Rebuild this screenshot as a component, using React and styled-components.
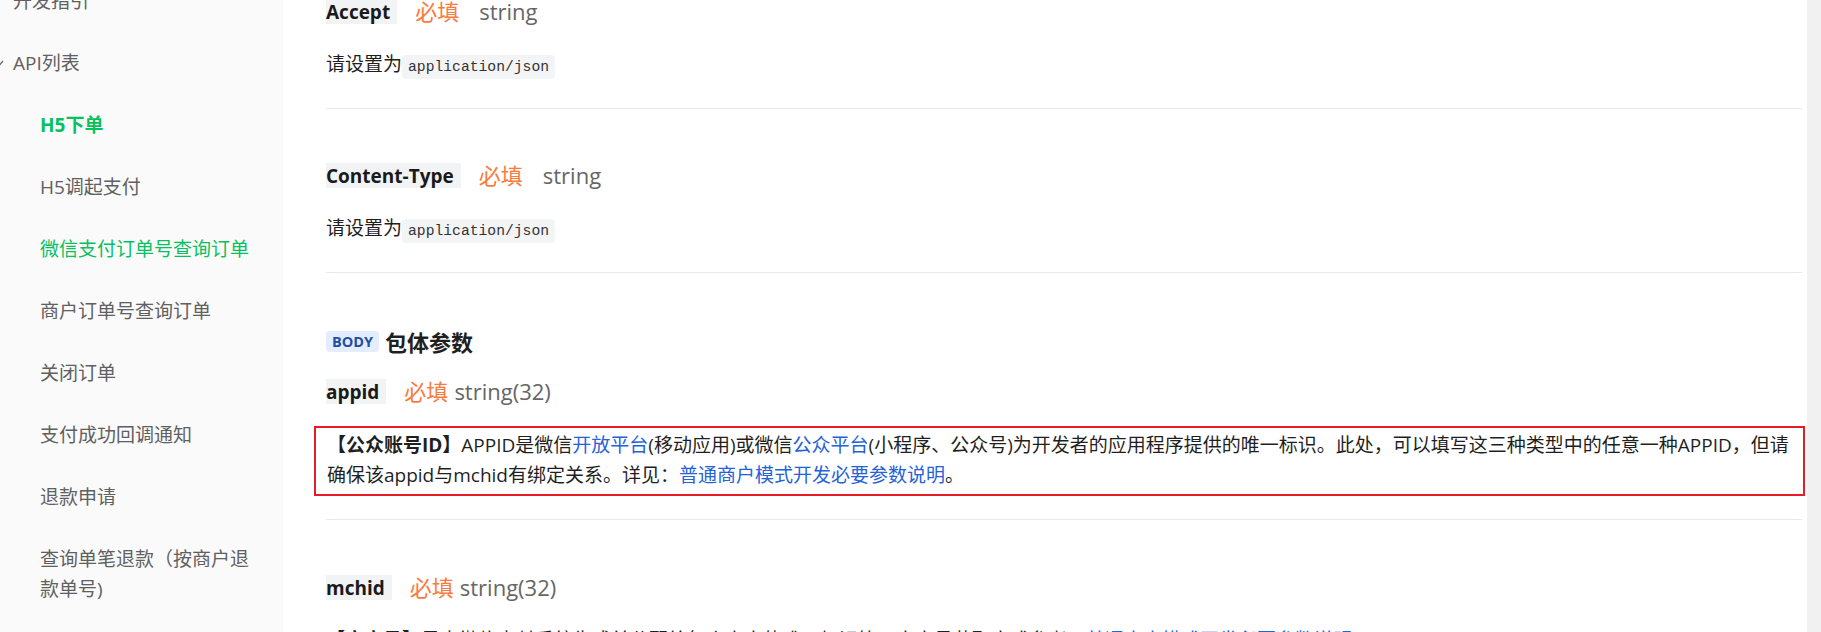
import React from 'react';
import styled, { createGlobalStyle } from 'styled-components';

const GlobalStyle = createGlobalStyle`
    html, body {
        margin: 0;
        padding: 0;
        height: 100%;
        overflow: hidden;
        background: #fff;
    }
    body {
        font-family: "Open Sans", "Noto Sans CJK SC", sans-serif;
        color: #1f1f1f;
    }
`

const Page = styled.div`
    display: flex;
    height: 632px;
    overflow: hidden;
`
const Sidebar = styled.aside`
    width: 283px;
    flex: none;
    background: #fafafa;
    overflow: hidden;
`
const NavList = styled.ul`
    list-style: none;
    margin: -30px 0 0;
    padding: 0;
`
const NavItem = styled.li`
    display: flex;
    align-items: center;
    padding: 16px 30px 16px ${p => (p.$group ? 13 : 40)}px;
    line-height: 30px;
    font-size: 19px;
    color: ${p => (p.$active ? '#07c160' : '#606060')};
    font-weight: ${p => (p.$bold ? 700 : 400)};
`
const Chevron = styled.svg`
    flex: none;
    width: 8px;
    height: 6px;
    margin-left: -17px;
    margin-right: 9px;
`
const Main = styled.main`
    flex: 1;
    min-width: 0;
    margin-top: -1px;
    padding: 0 5px 0 43px;
`
const Scrollbar = styled.div`
    width: 14px;
    flex: none;
    background: #f1f1f1;
`
const Block = styled.section`
    padding: ${p => p.$top}px 0 ${p => p.$bottom}px;
    border-bottom: 1px solid #e8e8ef;
`
const Row = styled.div`
    display: flex;
    align-items: center;
    height: 25px;
    margin-top: ${p => p.$mt || 0}px;
`
const NameTag = styled.span`
    display: inline-block;
    height: 25px;
    line-height: 26px;
    padding: 0 7px 0 0;
    background: #f2f3f5;
    font-size: 19px;
    font-weight: 700;
    color: #1a1a1a;
`
const Required = styled.span`
    margin-left: 18px;
    font-size: 22px;
    line-height: 25px;
    color: #fb7a3e;
`
const TypeText = styled.span`
    margin-left: ${p => p.$gap}px;
    font-size: 22px;
    line-height: 25px;
    color: #666;
`
const Desc = styled.p`
    margin: 25px 0 0;
    font-size: 19px;
    line-height: 30px;
    color: #1f1f1f;
`
const Highlight = styled.p`
    margin: 22px -3px 0 -12px;
    padding: 2px 11px 4px;
    border: 2px solid #e81c24;
    font-size: 19px;
    line-height: 30px;
    color: #1f1f1f;
`
const Code = styled.code`
    padding: 4px 6px;
    border-radius: 4px;
    background: #f3f4f6;
    font-family: "Liberation Mono", monospace;
    font-size: 14.7px;
    line-height: 1;
    color: #333;
`
const Link = styled.a`
    color: #2462d8;
    text-decoration: none;
`
const Heading = styled.h3`
    display: flex;
    align-items: center;
    gap: 6px;
    margin: 0;
    height: 30px;
    font-size: 22px;
    font-weight: 700;
    color: #1f1f1f;
`
const Badge = styled.span`
    display: inline-flex;
    align-items: center;
    height: 21px;
    padding: 0 6px;
    border-radius: 4px;
    background: #e3edfd;
    color: #1f4fa3;
    font-size: 14.5px;
    font-weight: 700;
`

const navItems = [
    { label: '开发指引', group: true },
    { label: 'API列表', group: true, open: true },
    { label: 'H5下单', active: true, bold: true },
    { label: 'H5调起支付' },
    { label: '微信支付订单号查询订单', active: true },
    { label: '商户订单号查询订单' },
    { label: '关闭订单' },
    { label: '支付成功回调通知' },
    { label: '退款申请' },
    { label: '查询单笔退款（按商户退款单号)' },
]

const Field = ({ name, type, gap }) => (
    <>
        <NameTag>{name}</NameTag>
        <Required>必填</Required>
        <TypeText $gap={gap}>{type}</TypeText>
    </>
)

const App = () => {
    return (
        <Page>
            <GlobalStyle />
            <Sidebar>
                <NavList>
                    {navItems.map(item => (
                        <NavItem key={item.label} $group={item.group} $active={item.active} $bold={item.bold}>
                            {item.open && (
                                <Chevron viewBox="0 0 8 6">
                                    <polyline points="1,1 4,4.5 7,1" fill="none" stroke="#666" strokeWidth="1.2" />
                                </Chevron>
                            )}
                            <span>{item.label}</span>
                        </NavItem>
                    ))}
                </NavList>
            </Sidebar>
            <Main>
                <Block $top={0} $bottom={29}>
                    <Row><Field name="Accept" type="string" gap={20} /></Row>
                    <Desc>请设置为<Code>application/json</Code></Desc>
                </Block>
                <Block $top={54} $bottom={29}>
                    <Row><Field name="Content-Type" type="string" gap={20} /></Row>
                    <Desc>请设置为<Code>application/json</Code></Desc>
                </Block>
                <Block $top={53} $bottom={23}>
                    <Heading><Badge>BODY</Badge>包体参数</Heading>
                    <Row $mt={23}><Field name="appid" type="string(32)" gap={6} /></Row>
                    <Highlight>
                        <b>【公众账号ID】</b>APPID是微信<Link href="#">开放平台</Link>(移动应用)或微信<Link href="#">公众平台</Link>(小程序、公众号)为开发者的应用程序提供的唯一标识。此处，可以填写这三种类型中的任意一种APPID，但请确保该appid与mchid有绑定关系。详见：<Link href="#">普通商户模式开发必要参数说明</Link>。
                    </Highlight>
                </Block>
                <Block $top={55} $bottom={29}>
                    <Row><Field name="mchid" type="string(32)" gap={6} /></Row>
                    <Desc>
                        <b>【商户号】</b>是由微信支付系统生成并分配给每个商户的唯一标识符，商户号获取方式参考：<Link href="#">普通商户模式开发必要参数说明</Link>。
                    </Desc>
                </Block>
            </Main>
            <Scrollbar />
        </Page>
    )
}
export default App
